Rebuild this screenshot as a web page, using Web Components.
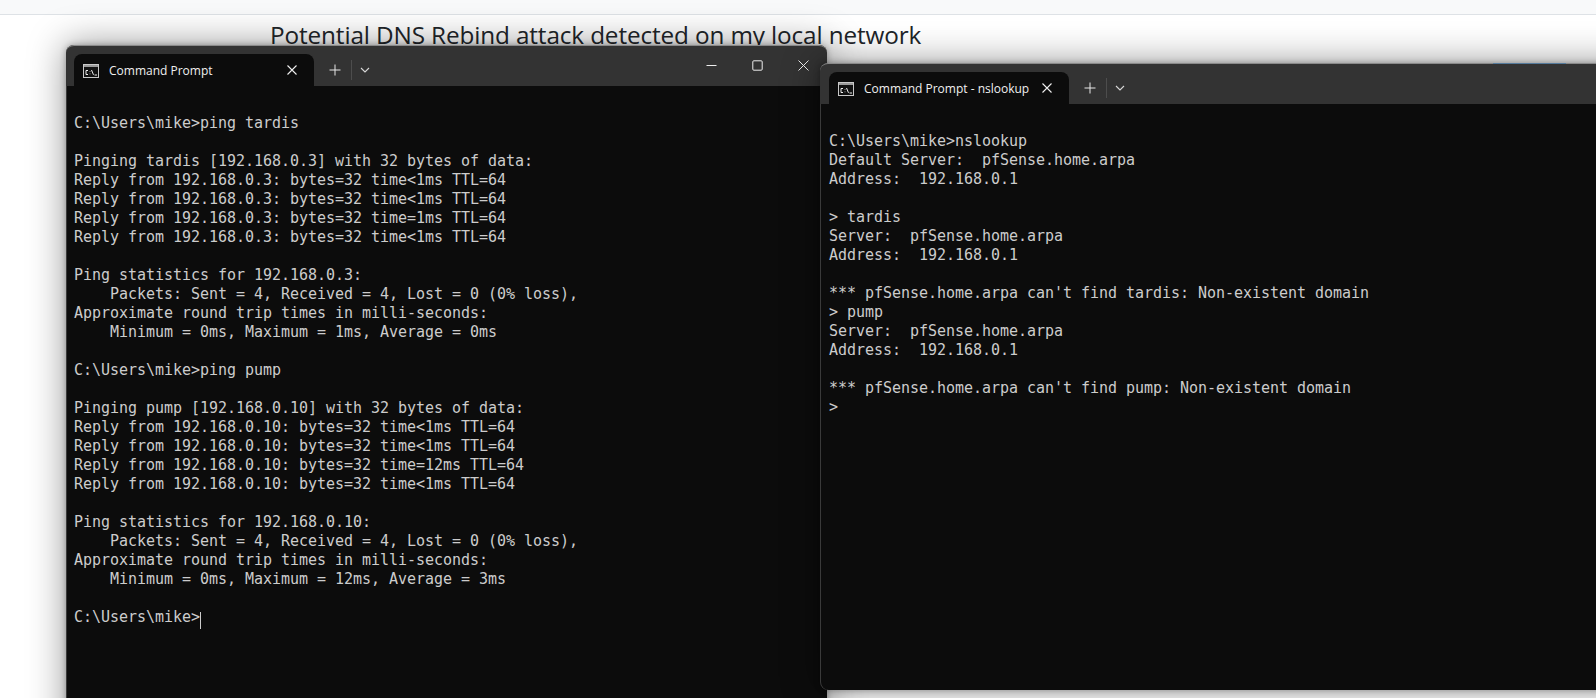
<!DOCTYPE html>
<html lang="en">
<head>
<meta charset="utf-8">
<title>Command Prompt windows</title>
<style>
html,body{margin:0;padding:0;height:100%;overflow:hidden;background:#fff}
</style>
</head>
<body>
<forum-page>
  <term-window slot="windows" tab="Command Prompt" controls style="--x:66px;--y:45px;--w:761px;--h:720px;--tabw:240px;--z:1;--shadow:0 0 36px 2px rgba(0,0,0,.38),0 0 6px rgba(0,0,0,.3)">C:\Users\mike&gt;ping tardis

Pinging tardis [192.168.0.3] with 32 bytes of data:
Reply from 192.168.0.3: bytes=32 time&lt;1ms TTL=64
Reply from 192.168.0.3: bytes=32 time&lt;1ms TTL=64
Reply from 192.168.0.3: bytes=32 time=1ms TTL=64
Reply from 192.168.0.3: bytes=32 time&lt;1ms TTL=64

Ping statistics for 192.168.0.3:
    Packets: Sent = 4, Received = 4, Lost = 0 (0% loss),
Approximate round trip times in milli-seconds:
    Minimum = 0ms, Maximum = 1ms, Average = 0ms

C:\Users\mike&gt;ping pump

Pinging pump [192.168.0.10] with 32 bytes of data:
Reply from 192.168.0.10: bytes=32 time&lt;1ms TTL=64
Reply from 192.168.0.10: bytes=32 time&lt;1ms TTL=64
Reply from 192.168.0.10: bytes=32 time=12ms TTL=64
Reply from 192.168.0.10: bytes=32 time&lt;1ms TTL=64

Ping statistics for 192.168.0.10:
    Packets: Sent = 4, Received = 4, Lost = 0 (0% loss),
Approximate round trip times in milli-seconds:
    Minimum = 0ms, Maximum = 12ms, Average = 3ms

C:\Users\mike&gt;<term-cursor></term-cursor></term-window>
  <term-window slot="windows" tab="Command Prompt - nslookup" style="--x:820px;--y:63px;--w:840px;--h:627px;--tabw:240px;--z:2;--shadow:0 0 36px 2px rgba(0,0,0,.38),0 0 6px rgba(0,0,0,.3)">C:\Users\mike&gt;nslookup
Default Server:  pfSense.home.arpa
Address:  192.168.0.1

&gt; tardis
Server:  pfSense.home.arpa
Address:  192.168.0.1

*** pfSense.home.arpa can't find tardis: Non-existent domain
&gt; pump
Server:  pfSense.home.arpa
Address:  192.168.0.1

*** pfSense.home.arpa can't find pump: Non-existent domain
&gt; </term-window>
</forum-page>
<script>
class ForumPage extends HTMLElement{
  constructor(){
    super();
    this.attachShadow({mode:'open'}).innerHTML=`
<style>
:host{display:block;position:relative;width:100%;height:698px;overflow:hidden;background:#fff;color:#212529}
.top{height:14px;background:#f8f9fa;border-bottom:1px solid #dee2e6}
h1{margin:0;padding:4px 0 0 270px;font:400 24.3px/32px "Open Sans","Noto Sans",sans-serif;letter-spacing:-.12px;white-space:nowrap}
.behind{position:absolute;left:1493px;top:63px;width:73px;height:1px;background:#567b9c;z-index:3}
</style>
<div class="top"></div>
<h1>Potential DNS Rebind attack detected on my local network</h1>
<div class="behind"></div>
<slot name="windows"></slot>`;
  }
}
class TermCursor extends HTMLElement{
  constructor(){
    super();
    this.attachShadow({mode:'open'}).innerHTML=`
<style>:host{display:inline-block;width:1px;height:17px;background:#ccc;vertical-align:-4px}</style>`;
  }
}
class TermWindow extends HTMLElement{
  constructor(){
    super();
    const name=this.getAttribute('tab')||'';
    const ctl=this.hasAttribute('controls');
    this.attachShadow({mode:'open'}).innerHTML=`
<style>
:host{position:absolute;left:var(--x);top:var(--y);width:var(--w);height:var(--h);z-index:var(--z);
  display:flex;flex-direction:column;box-sizing:border-box;background:#0c0c0c;border-radius:8px;box-shadow:var(--shadow);overflow:visible}
.bar{height:41px;flex:none;background:#333;border-radius:8px 8px 0 0;display:flex;align-items:flex-end;padding-left:8px;box-sizing:border-box;
  border-top:1px solid #8a8a8a}
.tab{width:var(--tabw);height:32px;flex:none;box-sizing:border-box;background:#0c0c0c;border-radius:8px 8px 0 0;display:flex;align-items:center;padding:2px 16px 0 9px;color:#f0f0f0;
  font:500 12px/16px "Open Sans","Noto Sans",sans-serif}
.tab svg.ico{width:16px;height:14px;flex:none;margin-right:10px}
.label{flex:1;white-space:nowrap;overflow:hidden}
.x{width:12px;height:12px;flex:none;margin-top:-2px}
.new{display:flex;align-items:center;height:32px;box-sizing:border-box;color:#eee}
.new svg{display:block}
.plus{margin-left:15px;width:12px;height:12px}
.sep{width:1px;height:20px;background:#4d4d4d;margin:0 8px 0 10px}
.chev{width:10px;height:6px}
.controls{margin-left:auto;align-self:stretch;display:flex;align-items:flex-start;padding:14px 18px 0 0;gap:0}
.controls svg{width:11px;height:11px;display:block}
.controls .b{margin-left:35px}
.body{flex:1;padding:28px 0 0 8px;font:15px/19px "DejaVu Sans Mono","Liberation Mono",monospace;letter-spacing:-.03px;color:#ccc;white-space:pre;overflow:hidden;
  box-shadow:inset 1px 0 0 rgba(90,90,90,.6);border-radius:0 0 0 8px}
:host([edge]) .bar{padding-left:9px}
:host([edge]) .body{padding-left:9px}
</style>
<div class="bar">
  <div class="tab">
    <svg class="ico" viewBox="0 0 16 14" aria-hidden="true">
      <rect x=".5" y=".5" width="15" height="13" fill="#111" stroke="#c8c8c8"/>
      <rect x="1" y="1" width="14" height="2" fill="#9a9a9a"/>
      <path d="M5 6.5H3v4h2M7 7v.6M7 9.6v.6M8.5 6l2 4.8M11.5 11H14" fill="none" stroke="#f0f0f0" stroke-width="1"/>
    </svg>
    <span class="label">${name}</span>
    <svg class="x" viewBox="0 0 12 12" aria-hidden="true"><path d="M1.5 1.5l9 9M10.5 1.5l-9 9" stroke="#f0f0f0" stroke-width="1.1" fill="none"/></svg>
  </div>
  <div class="new">
    <svg class="plus" viewBox="0 0 12 12" aria-hidden="true"><path d="M6 .5v11M.5 6h11" stroke="#e8e8e8" stroke-width="1"/></svg>
    <span class="sep"></span>
    <svg class="chev" viewBox="0 0 10 6" aria-hidden="true"><path d="M1 1l4 4 4-4" stroke="#d8d8d8" stroke-width="1.1" fill="none"/></svg>
  </div>
  ${ctl?`<div class="controls">
    <svg viewBox="0 0 11 11" aria-hidden="true"><path d="M.5 5.5h10" stroke="#eee" stroke-width="1"/></svg>
    <svg class="b" viewBox="0 0 11 11" aria-hidden="true"><rect x=".8" y=".8" width="9.4" height="9.4" rx="1" fill="none" stroke="#eee" stroke-width="1"/></svg>
    <svg class="b" viewBox="0 0 11 11" aria-hidden="true"><path d="M.5.5l10 10M10.5.5l-10 10" stroke="#eee" stroke-width="1"/></svg>
  </div>`:''}
</div>
<div class="body"><slot></slot></div>`;
    if(!ctl) this.setAttribute('edge','');
  }
}
customElements.define('forum-page',ForumPage);
customElements.define('term-cursor',TermCursor);
customElements.define('term-window',TermWindow);
</script>
</body>
</html>
